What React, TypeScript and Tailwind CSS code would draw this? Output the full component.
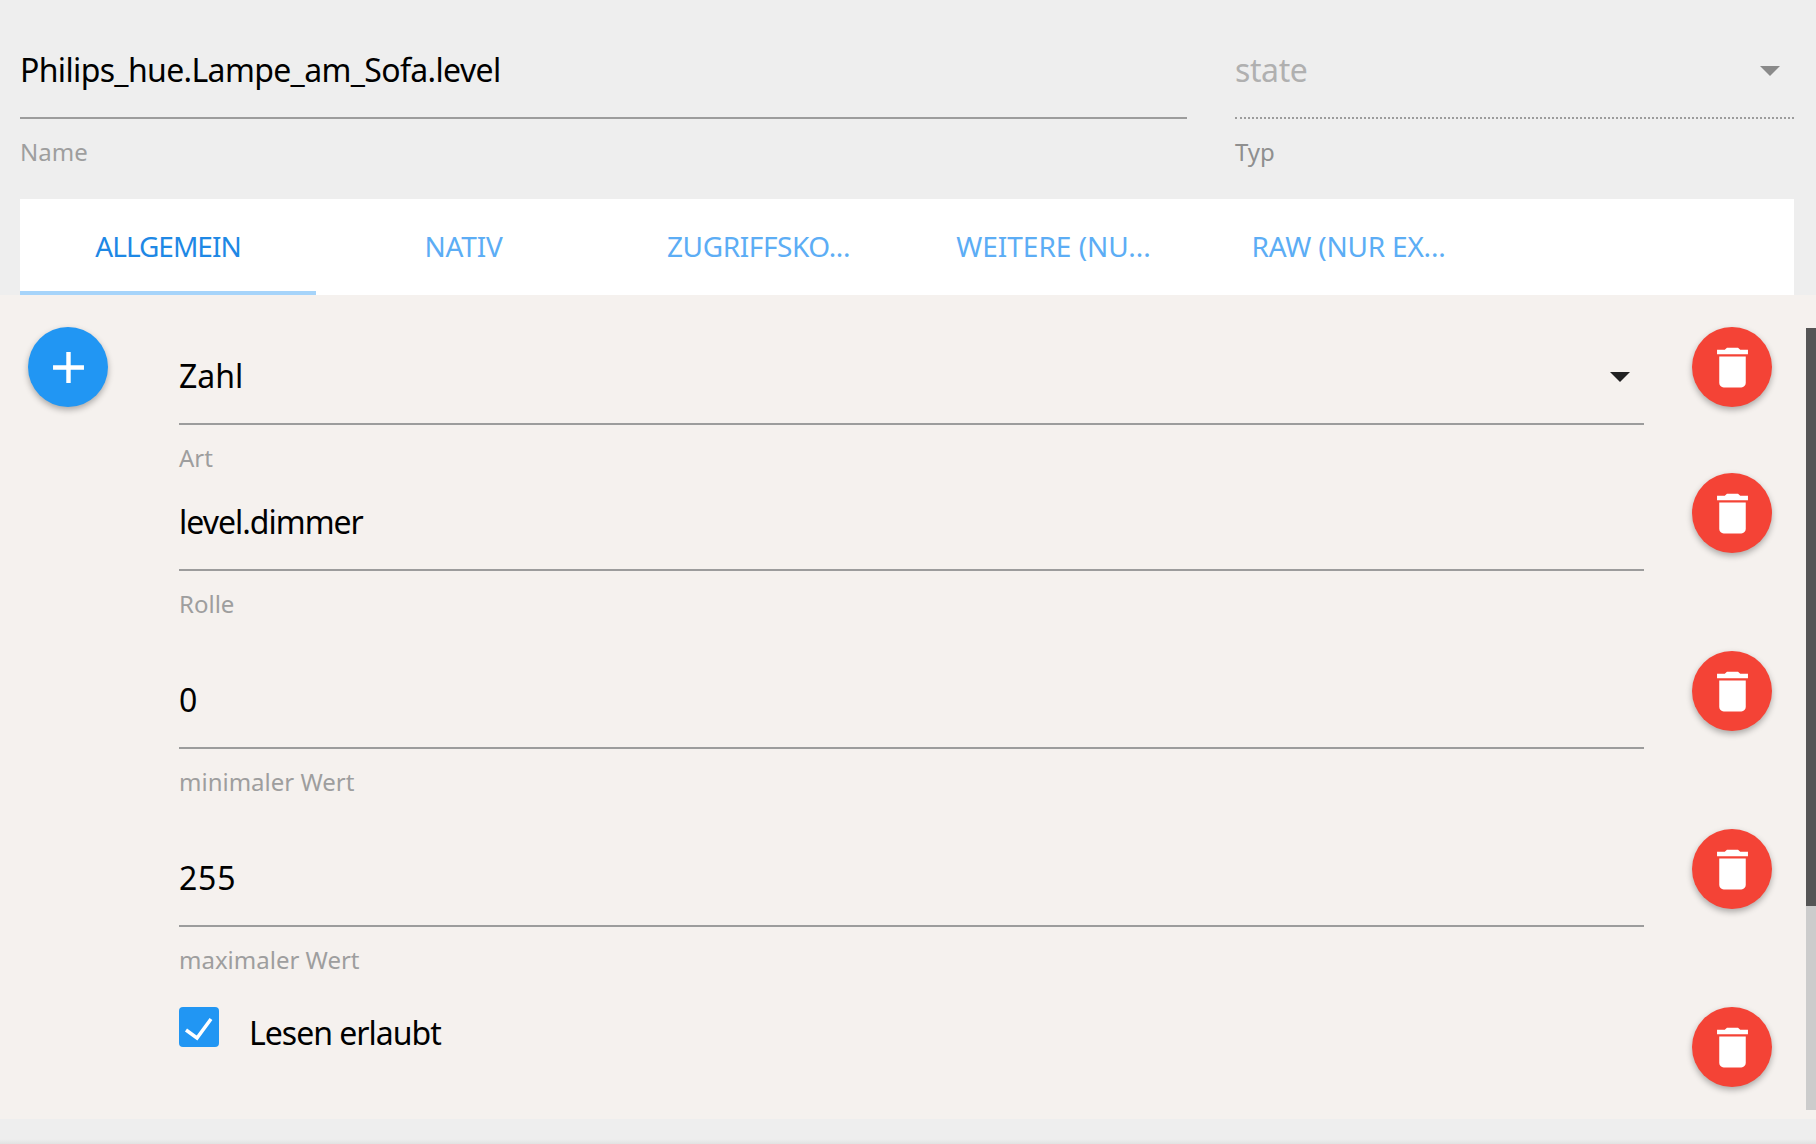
const FONT = "font-['Noto_Sans','Liberation_Sans',sans-serif]"

const TABS = [
  { label: 'ALLGEMEIN', tracking: 'tracking-[-1px]' },
  { label: 'NATIV', tracking: 'tracking-[-0.2px]' },
  { label: 'ZUGRIFFSKO...', tracking: 'tracking-[-0.4px]' },
  { label: 'WEITERE (NU...', tracking: 'tracking-normal' },
  { label: 'RAW (NUR EX...', tracking: 'tracking-[-0.2px]' }
]

function Caret({ className }: { className: string }): React.JSX.Element {
  return (
    <svg viewBox="0 0 20 10" className={className} fill="currentColor">
      <path d="M0 0h20L10 10z" />
    </svg>
  )
}

function Field({
  value,
  label,
  select,
  tracking = 'tracking-normal'
}: {
  value: string
  label: string
  select?: boolean
  tracking?: string
}): React.JSX.Element {
  return (
    <div>
      <div className="flex h-[98px] items-center justify-between border-b-2 border-[#9c9c9c] pt-[2px] pr-[14px]">
        <span className={`text-[32px] leading-[40px] text-black ${tracking}`}>{value}</span>
        {select && <Caret className="mt-[2px] h-[10px] w-[20px] text-[#212121]" />}
      </div>
      <div className="mt-[19px] text-[24px] leading-[28px] text-[#9e9e9e]">{label}</div>
    </div>
  )
}

function RoundButton({ color, path }: { color: string; path: string }): React.JSX.Element {
  return (
    <button
      className={`flex h-[80px] w-[80px] shrink-0 items-center justify-center rounded-full shadow-[0_3px_6px_0_rgba(0,0,0,0.3)] ${color}`}
    >
      <svg viewBox="0 0 24 24" className="h-[53px] w-[53px]" fill="#ffffff">
        <path d={path} />
      </svg>
    </button>
  )
}

const TRASH = 'M6 19c0 1.1.9 2 2 2h8c1.1 0 2-.9 2-2V7H6v12zM19 4h-3.5l-1-1h-5l-1 1H5v2h14V4z'
const PLUS = 'M19 13h-6v6h-2v-6H5v-2h6V5h2v6h6v2z'

function DeleteRow({
  height,
  children
}: {
  height: string
  children: React.ReactNode
}): React.JSX.Element {
  return (
    <div className={`flex items-start justify-between ${height}`}>
      <div className="w-[1465px]">{children}</div>
      <RoundButton color="bg-[#f44336]" path={TRASH} />
    </div>
  )
}

export default function App(): React.JSX.Element {
  return (
    <div className={`flex h-[1144px] w-[1816px] flex-col overflow-hidden bg-[#eeeeee] ${FONT}`}>
      <header className="flex h-[199px] gap-[48px] pt-[21px] pr-[22px] pl-[20px]">
        <div className="w-[1167px]">
          <div className="flex h-[98px] items-center border-b-2 border-[#9c9c9c] pt-[2px]">
            <span className="text-[32px] leading-[40px] tracking-[-0.65px] text-black">
              Philips_hue.Lampe_am_Sofa.level
            </span>
          </div>
          <div className="mt-[19px] text-[24px] leading-[28px] text-[#9e9e9e]">Name</div>
        </div>
        <div className="w-[559px]">
          <div className="flex h-[98px] items-center justify-between border-b-2 border-dotted border-[#9c9c9c] pt-[2px] pr-[14px]">
            <span className="text-[32px] leading-[40px] tracking-[-0.4px] text-[#b0b0b0]">state</span>
            <Caret className="mt-[2px] h-[10px] w-[20px] text-[#8a8a8a]" />
          </div>
          <div className="mt-[19px] text-[24px] leading-[28px] text-[#8f8f8f]">Typ</div>
        </div>
      </header>

      <nav className="ml-[20px] flex h-[96px] w-[1774px] bg-white">
        {TABS.map((tab, i) => (
          <div
            key={tab.label}
            className={
              i === 0
                ? `flex w-[296px] items-center justify-center border-b-4 border-[#a6d4fa] pt-[2px] text-[28px] text-[#1e88e5] ${tab.tracking}`
                : `flex w-[295px] items-center justify-center border-b-4 border-transparent pt-[2px] text-[28px] text-[#5cadf5] ${tab.tracking}`
            }
          >
            {tab.label}
          </div>
        ))}
      </nav>

      <main className="flex h-[824px] bg-[#f5f1ee]">
        <div className="flex flex-1 pt-[32px] pl-[28px]">
          <RoundButton color="bg-[#2196f3]" path={PLUS} />
          <div className="ml-[71px] flex-1 pr-[34px]">
            <DeleteRow height="h-[146px]">
              <Field value="Zahl" label="Art" select />
            </DeleteRow>
            <DeleteRow height="h-[178px]">
              <Field value="level.dimmer" label="Rolle" tracking="tracking-[-1px]" />
            </DeleteRow>
            <DeleteRow height="h-[178px]">
              <Field value="0" label="minimaler Wert" />
            </DeleteRow>
            <DeleteRow height="h-[178px]">
              <Field value="255" label="maximaler Wert" tracking="tracking-[0.8px]" />
            </DeleteRow>
            <DeleteRow height="h-[80px]">
              <div className="flex items-start gap-[30px]">
                <span className="flex h-[40px] w-[40px] items-center justify-center rounded-[4px] bg-[#2196f3]">
                  <svg viewBox="0 0 40 40" className="h-[40px] w-[40px]" fill="none" stroke="#ffffff" strokeWidth="3.5">
                    <path d="M7 23l11 8L32 12" />
                  </svg>
                </span>
                <span className="mt-[6px] text-[32px] leading-[40px] tracking-[-1px] text-black">Lesen erlaubt</span>
              </div>
            </DeleteRow>
          </div>
        </div>
        <div className="mt-[33px] mb-[9px] flex w-[10px] flex-col bg-[#cccccc]">
          <div className="h-[578px] bg-[#555555]" />
        </div>
      </main>

      <footer className="flex flex-1 flex-col justify-end">
        <div className="h-[5px] bg-gradient-to-b from-[#eeeeee] to-[#e2e2e2]" />
      </footer>
    </div>
  )
}
